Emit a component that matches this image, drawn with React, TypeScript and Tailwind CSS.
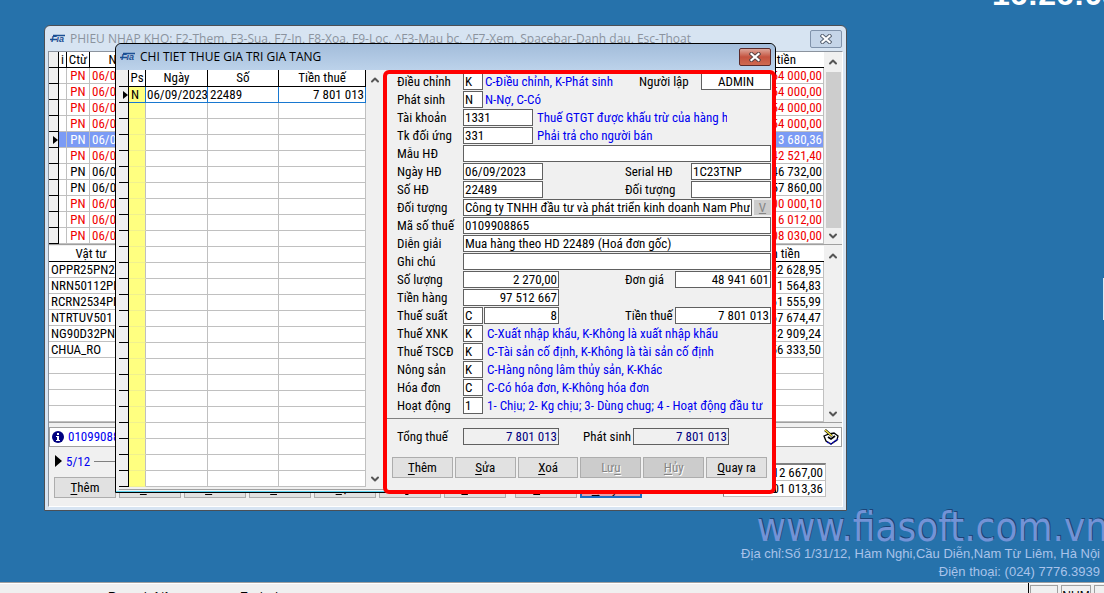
import type { ReactNode } from "react";
import { ChevronDown, ChevronUp } from "lucide-react";
import clsx from "clsx";

const vouchers = [
  { amount: "54 000,00", tone: "red" },
  { amount: "54 000,00", tone: "red" },
  { amount: "54 000,00", tone: "red" },
  { amount: "54 000,00", tone: "red" },
  { amount: "13 680,36", tone: "selected" },
  { amount: "42 521,40", tone: "red" },
  { amount: "46 732,00", tone: "black" },
  { amount: "57 860,00", tone: "black" },
  { amount: "00 000,10", tone: "red" },
  { amount: "16 012,00", tone: "red" },
  { amount: "08 030,00", tone: "red" },
];

const materials = [
  ["OPPR25PN2", "92 628,95"],
  ["NRN50112PN", "1 564,83"],
  ["RCRN2534PN", "61 555,99"],
  ["NTRTUV501", "67 674,47"],
  ["NG90D32PN", "32 909,24"],
  ["CHUA_RO", "56 333,50"],
  ["", ""],
  ["", ""],
  ["", ""],
  ["", ""],
];

const flags = [
  { id: "xnk", label: "Thuế XNK", value: "K", hint: "C-Xuất nhập khẩu, K-Không là xuất nhập khẩu" },
  { id: "tscd", label: "Thuế TSCĐ", value: "K", hint: "C-Tài sản cố định, K-Không là tài sản cố định" },
  { id: "nongsan", label: "Nông sản", value: "K", hint: "C-Hàng nông lâm thủy sản, K-Khác" },
  { id: "hoadon", label: "Hóa đơn", value: "C", hint: "C-Có hóa đơn, K-Không hóa đơn" },
  { id: "hoatdong", label: "Hoạt động", value: "1", hint: "1- Chịu; 2- Kg chịu; 3- Dùng chug; 4 - Hoạt động đầu tư" },
];

function Logo() {
  return (
    <svg viewBox="0 0 16 10" className="h-[10px] w-4 shrink-0" aria-hidden="true">
      <text x="1" y="8" fontSize="9" fontWeight="700" fontStyle="italic" fontFamily="Liberation Sans, sans-serif" fill="#1c4f93">
        Fia
      </text>
      <path d="M0 5.500h7M3 1.500h12" stroke="#1c4f93" strokeWidth="1.300" />
    </svg>
  );
}

function CloseIcon({ light }: { light?: boolean }) {
  return (
    <svg viewBox="0 0 12 10" className="h-[10px] w-3" aria-hidden="true">
      <path d="M2.500 2l7 6M9.500 2l-7 6" stroke={light ? "#5c4444" : "#596474"} strokeWidth="4.200" strokeLinecap="square" />
      <path d="M2.500 2l7 6M9.500 2l-7 6" stroke="#fff" strokeWidth="2.200" strokeLinecap="square" />
    </svg>
  );
}

function ScrollBar({ thumb }: { thumb?: boolean }) {
  return (
    <div className="flex w-[18px] shrink-0 flex-col items-center bg-[#f0f0f0] text-[#555]">
      <ChevronUp className="h-5 w-3" strokeWidth={4} />
      <div className={clsx("w-[15px] flex-1", thumb && "bg-[#cdcdcd]")} />
      <ChevronDown className="h-4 w-3" strokeWidth={4} />
    </div>
  );
}

function Marker() {
  return (
    <svg viewBox="0 0 5 8" className="ml-auto h-2 w-[5px]" aria-hidden="true">
      <path d="M0 0l5 4-5 4z" fill="#000" />
    </svg>
  );
}

type FieldProps = {
  id: string;
  value?: string;
  className?: string;
};

function Field({ id, value = "", className }: FieldProps) {
  return (
    <input
      id={id}
      defaultValue={value}
      className={clsx("h-[17px] min-w-0 border border-[#606060] px-px pb-px leading-[14px] outline-none", className)}
    />
  );
}

function Row({ id, label, children }: { id: string; label: string; children: ReactNode }) {
  return (
    <div className="flex h-[17px] items-center whitespace-nowrap">
      <label htmlFor={id} className="w-[66px] shrink-0">
        {label}
      </label>
      {children}
    </div>
  );
}

function Hint({ children, className }: { children: ReactNode; className?: string }) {
  return <span className={clsx("overflow-hidden text-[#0000f0]", className ?? "ml-1")}>{children}</span>;
}

// first letter carries the keyboard accelerator unless `at` says otherwise
function Command({ text, at = 0, disabled, className }: { text: string; at?: number; disabled?: boolean; className?: string }) {
  return (
    <button
      type="button"
      disabled={disabled}
      className={clsx(
        "h-[21px] border border-[#adadad] leading-[19px]",
        disabled ? "bg-[#cccccc] text-[#858585] [text-shadow:1px_1px_0_#fff]" : "bg-[#e1e1e1]",
        className
      )}
    >
      {text.slice(0, at)}
      <span className="underline underline-offset-2">{text[at]}</span>
      {text.slice(at + 1)}
    </button>
  );
}

function TaxTable() {
  return (
    <table className="w-[247px] table-fixed border-separate border-spacing-0 self-start bg-white">
      <thead>
        <tr className="h-[17px] *:border-b *:border-black *:p-0 *:font-normal *:leading-4">
          <th className="w-[10px] border-r bg-[#f0f0f0]" />
          <th className="w-[17px] border-r border-r-[#c0c0c0]">Ps</th>
          <th className="w-[62px] border-r border-r-[#c0c0c0]">Ngày</th>
          <th className="w-[71px] border-r border-r-[#c0c0c0]">Số</th>
          <th className="border-r border-r-[#c0c0c0]">Tiền thuế</th>
        </tr>
      </thead>
      <tbody>
        <tr className="h-4 *:border-b *:border-[#1878d0] *:p-0 *:leading-[15px]">
          <td className="border-r border-black! bg-[#f0f0f0]">
            <Marker />
          </td>
          <td className="border-r bg-[#ffff80] pl-0.5!">N</td>
          <td className="border-r border-r-[#c0c0c0] pl-px! whitespace-nowrap">06/09/2023</td>
          <td className="border-r border-r-[#c0c0c0] pl-0.5!">22489</td>
          <td className="border-r pr-px! text-right">7 801 013</td>
        </tr>
        {Array.from({ length: 24 }, (_, i) => (
          <tr key={i} className="h-4 *:border-r *:border-b *:border-[#c0c0c0] *:p-0">
            <td className="border-black! bg-[#f0f0f0]" />
            <td className="border-b-[#f0f090]! bg-[#ffff80]" />
            <td />
            <td />
            <td />
          </tr>
        ))}
      </tbody>
    </table>
  );
}

function TaxForm() {
  return (
    <form className="relative min-w-0 flex-1 bg-[#f0f0f0]">
      <div className="flex flex-col gap-px pt-[3px] pr-1 pl-[13px]">
        <Row id="dieuchinh" label="Điều chỉnh">
          <Field id="dieuchinh" value="K" className="w-5 bg-white" />
          <Hint className="ml-0.5">C-Điều chỉnh, K-Phát sinh</Hint>
          <label htmlFor="nguoilap" className="ml-auto w-[62px]">
            Người lập
          </label>
          <Field id="nguoilap" value="ADMIN" className="w-[70px] bg-white text-center" />
        </Row>
        <Row id="phatsinh" label="Phát sinh">
          <Field id="phatsinh" value="N" className="w-5 bg-white" />
          <Hint className="ml-0.5">N-Nợ, C-Có</Hint>
        </Row>
        <Row id="taikhoan" label="Tài khoản">
          <Field id="taikhoan" value="1331" className="w-[70px] bg-white" />
          <Hint className="ml-1 w-[190px]">Thuế GTGT được khấu trừ của hàng hóa</Hint>
        </Row>
        <Row id="doiung" label="Tk đối ứng">
          <Field id="doiung" value="331" className="w-[70px] bg-white" />
          <Hint>Phải trả cho người bán</Hint>
        </Row>
        <Row id="mauhd" label="Mẫu HĐ">
          <Field id="mauhd" className="flex-1 bg-white" />
        </Row>
        <Row id="ngayhd" label="Ngày HĐ">
          <Field id="ngayhd" value="06/09/2023" className="w-20 bg-white" />
          <label htmlFor="serial" className="ml-auto w-[66px]">
            Serial HĐ
          </label>
          <Field id="serial" value="1C23TNP" className="w-20 bg-white" />
        </Row>
        <Row id="sohd" label="Số HĐ">
          <Field id="sohd" value="22489" className="w-20 bg-white" />
          <label htmlFor="madoituong" className="ml-auto w-[66px]">
            Đối tượng
          </label>
          <Field id="madoituong" className="w-20 bg-white" />
        </Row>
        <Row id="doituong" label="Đối tượng">
          <Field id="doituong" value="Công ty TNHH đầu tư và phát triển kinh doanh Nam Phương" className="flex-1 bg-white" />
          <button type="button" className="ml-0.5 h-[15px] w-[17px] bg-[#cccccc] leading-[15px] text-[#858585] underline">
            V
          </button>
        </Row>
        <Row id="masothue" label="Mã số thuế">
          <Field id="masothue" value="0109908865" className="flex-1 bg-white" />
        </Row>
        <Row id="diengiai" label="Diễn giải">
          <Field id="diengiai" value="Mua hàng theo HD 22489 (Hoá đơn gốc)" className="flex-1 bg-white" />
        </Row>
        <Row id="ghichu" label="Ghi chú">
          <Field id="ghichu" className="flex-1 bg-white" />
        </Row>
        <Row id="soluong" label="Số lượng">
          <Field id="soluong" value="2 270,00" className="w-24 bg-white text-right" />
          <label htmlFor="dongia" className="ml-auto w-[50px]">
            Đơn giá
          </label>
          <Field id="dongia" value="48 941 601" className="w-24 bg-white text-right" />
        </Row>
        <Row id="tienhang" label="Tiền hàng">
          <Field id="tienhang" value="97 512 667" className="w-24 bg-white text-right" />
        </Row>
        <Row id="thuesuat" label="Thuế suất">
          <Field id="thuesuat" value="C" className="w-5 bg-white" />
          <Field id="phantram" value="8" className="ml-px w-[75px] bg-white text-right" />
          <label htmlFor="tienthue" className="ml-auto w-[50px]">
            Tiền thuế
          </label>
          <Field id="tienthue" value="7 801 013" className="w-24 bg-white text-right" />
        </Row>
        {flags.map((f) => (
          <Row key={f.id} id={f.id} label={f.label}>
            <Field id={f.id} value={f.value} className="w-5 bg-white" />
            <Hint>{f.hint}</Hint>
          </Row>
        ))}
      </div>

      <hr className="mt-1 border-[#808080]" />

      <div className="mt-[9px] pr-1 pl-[13px]">
        <Row id="tongthue" label="Tổng thuế">
          <Field id="tongthue" value="7 801 013" className="w-24 text-right text-[#000080]" />
          <label htmlFor="tongps" className="ml-6 w-[50px]">
            Phát sinh
          </label>
          <Field id="tongps" value="7 801 013" className="w-24 text-right text-[#000080]" />
        </Row>
      </div>

      <div className="mt-3 flex gap-0.5 px-2">
        <Command text="Thêm" className="flex-1" />
        <Command text="Sửa" className="flex-1" />
        <Command text="Xoá" className="flex-1" />
        <Command text="Lưu" at={2} disabled className="flex-1" />
        <Command text="Hủy" disabled className="flex-1" />
        <Command text="Quay ra" className="flex-1" />
      </div>

      {/* highlight frame around the form */}
      <div className="pointer-events-none absolute -inset-x-px top-0 -bottom-1 rounded-md border-4 border-[#ff0000]" />
    </form>
  );
}

function TaxDialog() {
  return (
    <section className="absolute top-[43px] left-[115px] w-[661px] rounded-t-md border border-black bg-[#b4cce6]">
      <header className="flex h-[26px] items-center gap-1 rounded-t-md bg-linear-to-b from-[#a3bddb] to-[#bcd2ea] pr-1 pl-1 font-['Open_Sans',sans-serif] text-xs">
        <Logo />
        <h2 className="flex-1">CHI TIET THUE GIA TRI GIA TANG</h2>
        <button
          type="button"
          aria-label="Close"
          className="flex h-[18px] w-8 items-center justify-center rounded-xs border border-[#5b2a2a] bg-linear-to-b from-[#dca59a] via-[#c4523f] via-50% to-[#cf6a50]"
        >
          <CloseIcon light />
        </button>
      </header>
      <div className="flex border-b border-[#5cd4f0] bg-[#f0f0f0] pb-px pl-[3px]">
        <div className="flex border-b border-[#a0a0a0] pb-0.5">
          <TaxTable />
          <ScrollBar />
        </div>
        <TaxForm />
      </div>
    </section>
  );
}

function ReceiptWindow() {
  return (
    <section className="absolute top-[25px] left-[44px] w-[803px] rounded-t-md border border-[#4b4f55] bg-[#d7e4f2] px-[3px] pb-[3px]">
      <header className="flex h-[25px] items-center gap-1 pr-px pl-0.5 font-['Open_Sans',sans-serif] text-xs text-[#8b939e]">
        <Logo />
        <h1 className="flex-1 whitespace-nowrap">
          PHIEU NHAP KHO: F2-Them, F3-Sua, F7-In, F8-Xoa, F9-Loc, ^F3-Mau bc, ^F7-Xem, Spacebar-Danh dau, Esc-Thoat
        </h1>
        <button
          type="button"
          aria-label="Close"
          className="flex h-[18px] w-8 items-center justify-center rounded-xs border border-[#8193ab] bg-[#c5d5e8]"
        >
          <CloseIcon />
        </button>
      </header>

      <div className="border border-[#8b939e] border-r-white border-b-white bg-[#f0f0f0]">
        <div className="flex border-b border-[#a0a0a0]">
          <table className="flex-1 table-fixed border-separate border-spacing-0 bg-white">
            <thead>
              <tr className="h-4 *:border-b *:border-black *:p-0 *:font-normal *:leading-[15px]">
                <th className="w-[10px] border-r bg-[#f0f0f0]" />
                <th className="w-2 border-r border-r-[#c0c0c0]">i</th>
                <th className="w-[23px] border-r border-r-[#c0c0c0]">Ctừ</th>
                <th className="w-[62px] border-r border-r-[#c0c0c0]">Ngày</th>
                <th />
                <th className="w-20 pr-7! text-right">tiền</th>
              </tr>
            </thead>
            <tbody>
              {vouchers.map((v, i) => (
                <tr
                  key={i}
                  className={clsx(
                    "h-4 *:border-b *:border-[#c0c0c0] *:p-0 *:leading-[15px]",
                    v.tone === "red" && "text-[#f00000]",
                    v.tone === "selected" && "bg-[#7b9bf5] text-white"
                  )}
                >
                  <td className="border-r border-black! bg-[#f0f0f0]">{v.tone === "selected" && <Marker />}</td>
                  <td className="border-r" />
                  <td className="border-r text-center">PN</td>
                  <td className="border-r pl-0.5!">06/09/2023</td>
                  <td />
                  <td className="border-r pr-px! text-right whitespace-nowrap">{v.amount}</td>
                </tr>
              ))}
            </tbody>
          </table>
          <ScrollBar thumb />
        </div>

        <div className="flex border-b border-[#a0a0a0] pt-px">
          <table className="flex-1 table-fixed border-separate border-spacing-0 bg-white">
            <thead>
              <tr className="h-4 *:border-b *:border-black *:p-0 *:font-normal *:leading-[15px]">
                <th className="w-[84px]">Vật tư</th>
                <th />
                <th className="w-20 pr-6! text-right whitespace-nowrap">Thành tiền</th>
              </tr>
            </thead>
            <tbody>
              {materials.map(([code, amount], i) => (
                <tr key={i} className="h-4 *:border-b *:border-[#c0c0c0] *:p-0 *:leading-[15px]">
                  <td className="pl-0.5! whitespace-nowrap">{code}</td>
                  <td />
                  <td className="border-r pr-0.5! text-right">{amount}</td>
                </tr>
              ))}
            </tbody>
          </table>
          <ScrollBar />
        </div>

        <div className="mt-1 flex h-5 items-center gap-1 border border-[#a0a0a0] bg-white px-0.5 text-[#0000f0]">
          <svg viewBox="0 0 12 12" className="h-3 w-3" aria-hidden="true">
            <circle cx="6" cy="6" r="6" fill="#000080" />
            <path d="M5 2h2v2H5zM4 5h3v4h1v1H4V9h1V6H4z" fill="#fff" />
          </svg>
          <span className="flex-1">0109908865</span>
          <svg viewBox="0 0 16 16" className="h-4 w-4" aria-hidden="true">
            <path d="M1 7l5-2 5-1 4 3-1 4-6 4-5-3z" fill="#fff" stroke="#000" strokeWidth="1.300" />
            <path d="M4 13l4 2 7-5" fill="none" stroke="#1010c0" strokeWidth="1.500" strokeDasharray="2 1" />
            <path d="M5 8l3 2 4-3" fill="none" stroke="#000" strokeWidth="1.800" />
            <path d="M2 1l7 6" stroke="#000" strokeWidth="2.500" />
            <path d="M2 1l7 6" stroke="#f5e642" strokeWidth="1.500" />
          </svg>
        </div>

        <div className="flex gap-20 pt-2 pr-4 pb-2 pl-[5px]">
          <div className="flex flex-1 flex-col">
            <div className="mb-2 flex h-3 items-center leading-none">
              <svg viewBox="0 0 8 12" className="h-3 w-2" aria-hidden="true">
                <path d="M1 0l7 6-7 6z" fill="#000" />
              </svg>
              <span className="ml-1 text-[#0000f0]">5/12</span>
              <span className="ml-1 h-px flex-1 bg-[#808080]" />
            </div>
            <div className="mt-0.5 flex gap-[3px]">
              <Command text="Thêm" className="w-[62px]" />
              <Command text="Sửa" className="w-[62px]" />
              <Command text="Xoá" className="w-[62px]" />
              <Command text="Tìm" className="w-[62px]" />
              <Command text="Lọc" className="w-[62px]" />
              <Command text="In" className="w-[62px]" />
              <Command text="Excel" className="mr-1.5 w-[62px]" />
              <Command text="Thuế" className="w-[62px]" />
              <Command text="Quay ra" className="w-[62px] border-2 border-[#1c6fc4]! bg-[#e8a0a8]!" />
            </div>
          </div>
          <div className="mt-2 w-[103px] self-start border border-t-2 border-[#808080] border-r-[#c0c0c0] border-b-[#c0c0c0] bg-white text-right leading-[15px]">
            <p className="border-b border-[#c0c0c0] pr-0.5">97 512 667,00</p>
            <p className="pr-0.5">7 801 013,36</p>
          </div>
        </div>
      </div>
    </section>
  );
}

export default function App() {
  return (
    <div className="flex h-screen flex-col overflow-hidden bg-[#2672ab] font-['Roboto_Condensed','Liberation_Sans',sans-serif] text-[13px] text-black">
      <main className="relative flex min-h-0 flex-1 flex-col items-end justify-between overflow-hidden">
        <p className="-mt-6 -mr-4 font-['Liberation_Sans',sans-serif] text-[32px] leading-9 font-bold text-white">16:26:08</p>
        <div className="absolute top-[278px] right-0 h-[42px] w-px bg-[#dfe8f2]" />

        <div className="text-right">
          <p className="-mr-1 font-['DejaVu_Sans_Condensed',Tahoma,sans-serif] text-[40px] leading-9 text-[#7393d6] [text-shadow:1px_-1px_0_#1c4478]">
            www.fiasoft.com.vn
          </p>
          <address className="pr-1 pb-px font-['Liberation_Sans',sans-serif] leading-[18px] text-[#a9c3ea] not-italic">
            Địa chỉ:Số 1/31/12, Hàm Nghi,Cầu Diễn,Nam Từ Liêm, Hà Nội
            <br />
            Điện thoại: (024) 7776.3939
          </address>
        </div>

        <ReceiptWindow />
        <TaxDialog />
      </main>

      <footer className="flex h-[11px] shrink-0 items-start border-t border-[#a0a0a0] bg-[#f0f0f0] font-['Liberation_Sans',sans-serif] text-xs leading-3 shadow-[inset_0_1px_0_#fff]">
        <p className="w-[240px] pt-2 pl-[108px]">Record: 1/1</p>
        <p className="flex-1 pt-2">Exclusive</p>
        <div className="flex h-5 gap-[3px] border-l border-black pt-0.5 pl-px">
          <span className="w-7 border border-[#a0a0a0]" />
          <span className="w-[30px] border border-[#a0a0a0] pt-1 text-center">NUM</span>
          <span className="w-[10px] border border-r-0 border-[#a0a0a0]" />
        </div>
      </footer>
    </div>
  );
}
